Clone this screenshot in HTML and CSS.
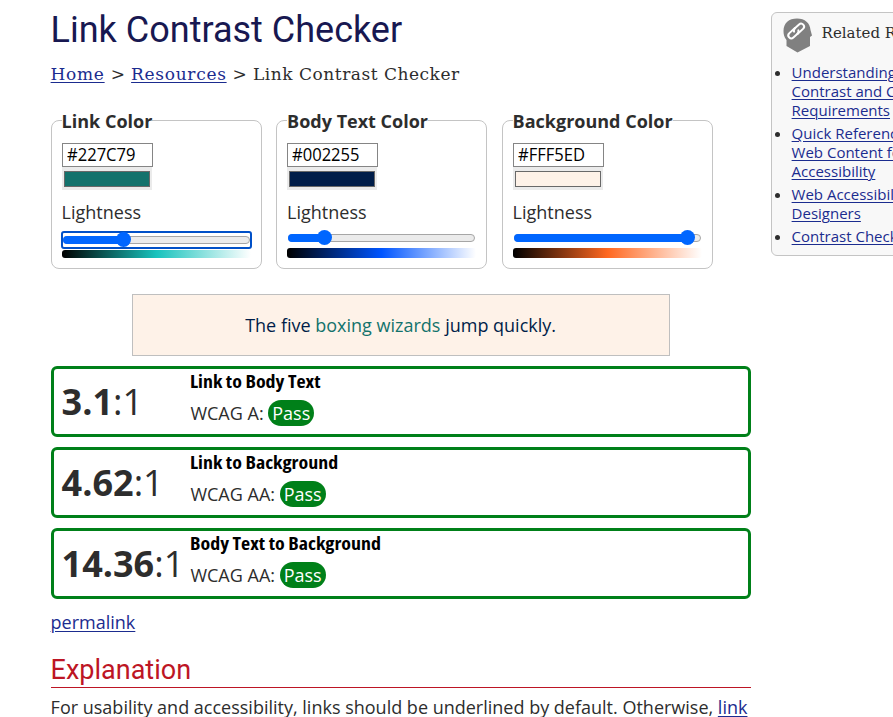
FILE: index.html
```html
<!DOCTYPE html>
<html lang="en">
<head>
<meta charset="utf-8">
<title>Link Contrast Checker</title>
<link rel="stylesheet" href="styles.css">
</head>
<body>
<div class="page">
  <main>
    <h1>Link Contrast Checker</h1>
    <nav class="crumbs"><a href="#">Home</a><span class="sep">&gt;</span><a href="#">Resources</a><span class="sep">&gt;</span><span class="current">Link Contrast Checker</span></nav>
    <div class="pickers">
      <fieldset class="picker link-picker">
        <legend>Link Color</legend>
        <div class="hex"><span>#227C79</span></div>
        <div class="well"><div class="swatch"></div></div>
        <div class="lightness">Lightness</div>
        <div class="slider focused"><div class="track"><div class="fill"></div><div class="thumb"></div></div></div>
        <div class="gradient"></div>
      </fieldset>
      <fieldset class="picker body-picker">
        <legend>Body Text Color</legend>
        <div class="hex"><span>#002255</span></div>
        <div class="well"><div class="swatch"></div></div>
        <div class="lightness">Lightness</div>
        <div class="slider"><div class="track"><div class="fill"></div><div class="thumb"></div></div></div>
        <div class="gradient"></div>
      </fieldset>
      <fieldset class="picker back-picker">
        <legend>Background Color</legend>
        <div class="hex"><span>#FFF5ED</span></div>
        <div class="well"><div class="swatch"></div></div>
        <div class="lightness">Lightness</div>
        <div class="slider"><div class="track"><div class="fill"></div><div class="thumb"></div></div></div>
        <div class="gradient"></div>
      </fieldset>
    </div>
    <p class="sample">The five <span>boxing wizards</span> jump quickly.</p>
    <section class="result">
      <div class="ratio"><b>3.1</b>:1</div>
      <div><h3>Link to Body Text</h3><p>WCAG A: <span class="pass">Pass</span></p></div>
    </section>
    <section class="result">
      <div class="ratio"><b>4.62</b>:1</div>
      <div><h3>Link to Background</h3><p>WCAG AA: <span class="pass">Pass</span></p></div>
    </section>
    <section class="result">
      <div class="ratio"><b>14.36</b>:1</div>
      <div><h3>Body Text to Background</h3><p>WCAG AA: <span class="pass">Pass</span></p></div>
    </section>
    <p class="permalink"><a href="#">permalink</a></p>
    <h2>Explanation</h2>
    <p class="intro">For usability and accessibility, links should be underlined by default. Otherwise, <a href="#">link</a></p>
  </main>
  <aside>
    <div class="related">
      <svg width="30" height="36" viewBox="0 0 30 36"><path d="M14 .5C22 .5 27 5 27.500 12L29 17.500L27 19V28L14.500 34.500L3.500 28V22C1 19 .5 16 .5 13C.5 5 6 .5 14 .5Z" fill="#808080"/><g transform="translate(13.200 13) rotate(-42)" fill="none" stroke="#fff" stroke-width="2" stroke-linecap="round"><path d="M1 -3H-6.500A3 3 0 0 0 -6.500 3H-2Q1.500 3 2 1"/><path d="M-1 3H6.500A3 3 0 0 0 6.500 -3H2Q-1.500 -3 -2 -1"/></g></svg>
      <span>Related Resources</span>
    </div>
    <ul>
      <li><a href="#">Understanding WCAG<br>Contrast and Color<br>Requirements</a></li>
      <li><a href="#">Quick Reference:<br>Web Content for<br>Accessibility</a></li>
      <li><a href="#">Web Accessibility for<br>Designers</a></li>
      <li><a href="#">Contrast Checker</a></li>
    </ul>
  </aside>
</div>
</body>
</html>
```
FILE: styles.css
```css
* { box-sizing: border-box; }
html, body { overflow: hidden; }
body { margin: 0; height: 717px; background: #fff; color: #2d2d2d; font: 18px/24px "Open Sans", sans-serif; }
a { color: #1b2c8f; text-decoration: underline; text-decoration-thickness: 1px; text-underline-offset: 2px; }
h1, h2, h3, p { margin: 0; }
.page { display: flex; gap: 20px; width: 1051px; padding-left: 50.6px; }
main { flex: 0 0 700px; padding-top: 9px; }
h1 { font: 400 36px/42px Roboto, sans-serif; color: #181851; }
.crumbs { display: flex; margin-top: 13px; font: 17px/20px "DejaVu Serif", serif; letter-spacing: .7px; white-space: nowrap; }
.sep { margin: 0 5.5px 0 6px; }
.current { letter-spacing: .52px; }
.pickers { display: flex; gap: 14.5px; margin-top: 25px; }
.picker { width: 211px; height: 160px; min-width: 0; margin: 0; padding: 11px 10px 0; border: 1px solid #c4c4c4; border-radius: 8px; }
legend { height: 23px; padding: 0; line-height: 24px; font-weight: 700; white-space: nowrap; }
.hex { width: 91px; height: 24px; padding-left: 4px; border: 1px solid #858585; line-height: 20px; color: #000; }
.hex span { display: inline-block; transform: scaleX(.92); transform-origin: left; }
.well { width: 90px; height: 23px; padding: 4px 2px 3px; background: #ebebeb; }
.swatch { height: 16px; border: 1px solid #696969; }
.lightness { margin-top: 9px; height: 27px; line-height: 26px; }
.slider { height: 18px; padding: 4px 1px 0; margin-top: 4px; }
.track { position: relative; height: 8px; border: 1px solid #a6a6a6; border-radius: 4px; background: #ebebeb; }
.fill { height: 8px; margin: -1px; border-radius: 4px; background: #0066ff; }
.thumb { position: absolute; top: -5px; width: 15px; height: 15px; border-radius: 50%; background: #0066ff; }
.focused { height: 18px; margin: 5px -1px 0; padding: 3px 0 0; border: 2px solid #0050c8; border-radius: 3px; margin-bottom: 1px; }
.gradient { height: 10px; border-radius: 3px; }
.focused + .gradient { height: 8px; }
.link-picker .swatch { background: #13726c; }
.link-picker .fill { width: 60px; }
.link-picker .thumb { left: 52px; }
.link-picker .gradient { background: linear-gradient(90deg, #000, #18c3bd 50%, #fff); }
.body-picker .swatch { background: #001d49; }
.body-picker .fill { width: 37px; }
.body-picker .thumb { left: 28px; }
.body-picker .gradient { background: linear-gradient(90deg, #000, #0055ff 50%, #fff); }
.back-picker .swatch { background: #fef2e8; }
.back-picker .fill { width: 173px; }
.back-picker .thumb { left: 165px; }
.back-picker .gradient { background: linear-gradient(90deg, #000, #ff6820 50%, #fff); }
.sample { width: 538px; height: 62px; margin: 25px 0 10px 81px; border: 1px solid #bfbfbf; background: #fef2e8; color: #001d49; line-height: 61px; text-align: center; }
.sample span { color: #13726c; }
.result { display: flex; height: 71px; margin-bottom: 10px; padding-left: 8px; border: 3px solid #008019; border-radius: 6px; }
.ratio { flex: 0 0 128.800px; font-size: 36px; line-height: 66px; white-space: nowrap; }
.result h3 { margin-top: 1px; font-size: 17px; line-height: 24px; font-stretch: 80%; color: #000; transform: scaleX(1.17); transform-origin: left; white-space: nowrap; }
.result p { margin-top: 6px; line-height: 26px; }
.pass { display: inline-block; height: 26px; padding: 0 4px; border-radius: 13px; background: #008019; color: #fff; }
.permalink { margin-top: 11px; }
h2 { margin-top: 20px; height: 34px; border-bottom: 1px solid #bd1524; font: 400 27px/32px Roboto, sans-serif; color: #bd1524; }
.intro { margin-top: 7px; white-space: nowrap; }
aside { width: 260px; height: 244px; margin-top: 12px; border: 1px solid #c4c4c4; border-radius: 6px; background: #f8f8f8; font-size: 15px; line-height: 19px; flex: none; }
.related { display: flex; gap: 9px; padding: 5px 0 0 11px; font: 15px/31px "DejaVu Serif", serif; letter-spacing: 0; white-space: nowrap; }
aside ul { margin: 9px 0 0; padding: 0 0 0 20px; }
aside li { margin-bottom: 4px; white-space: nowrap; }
```
